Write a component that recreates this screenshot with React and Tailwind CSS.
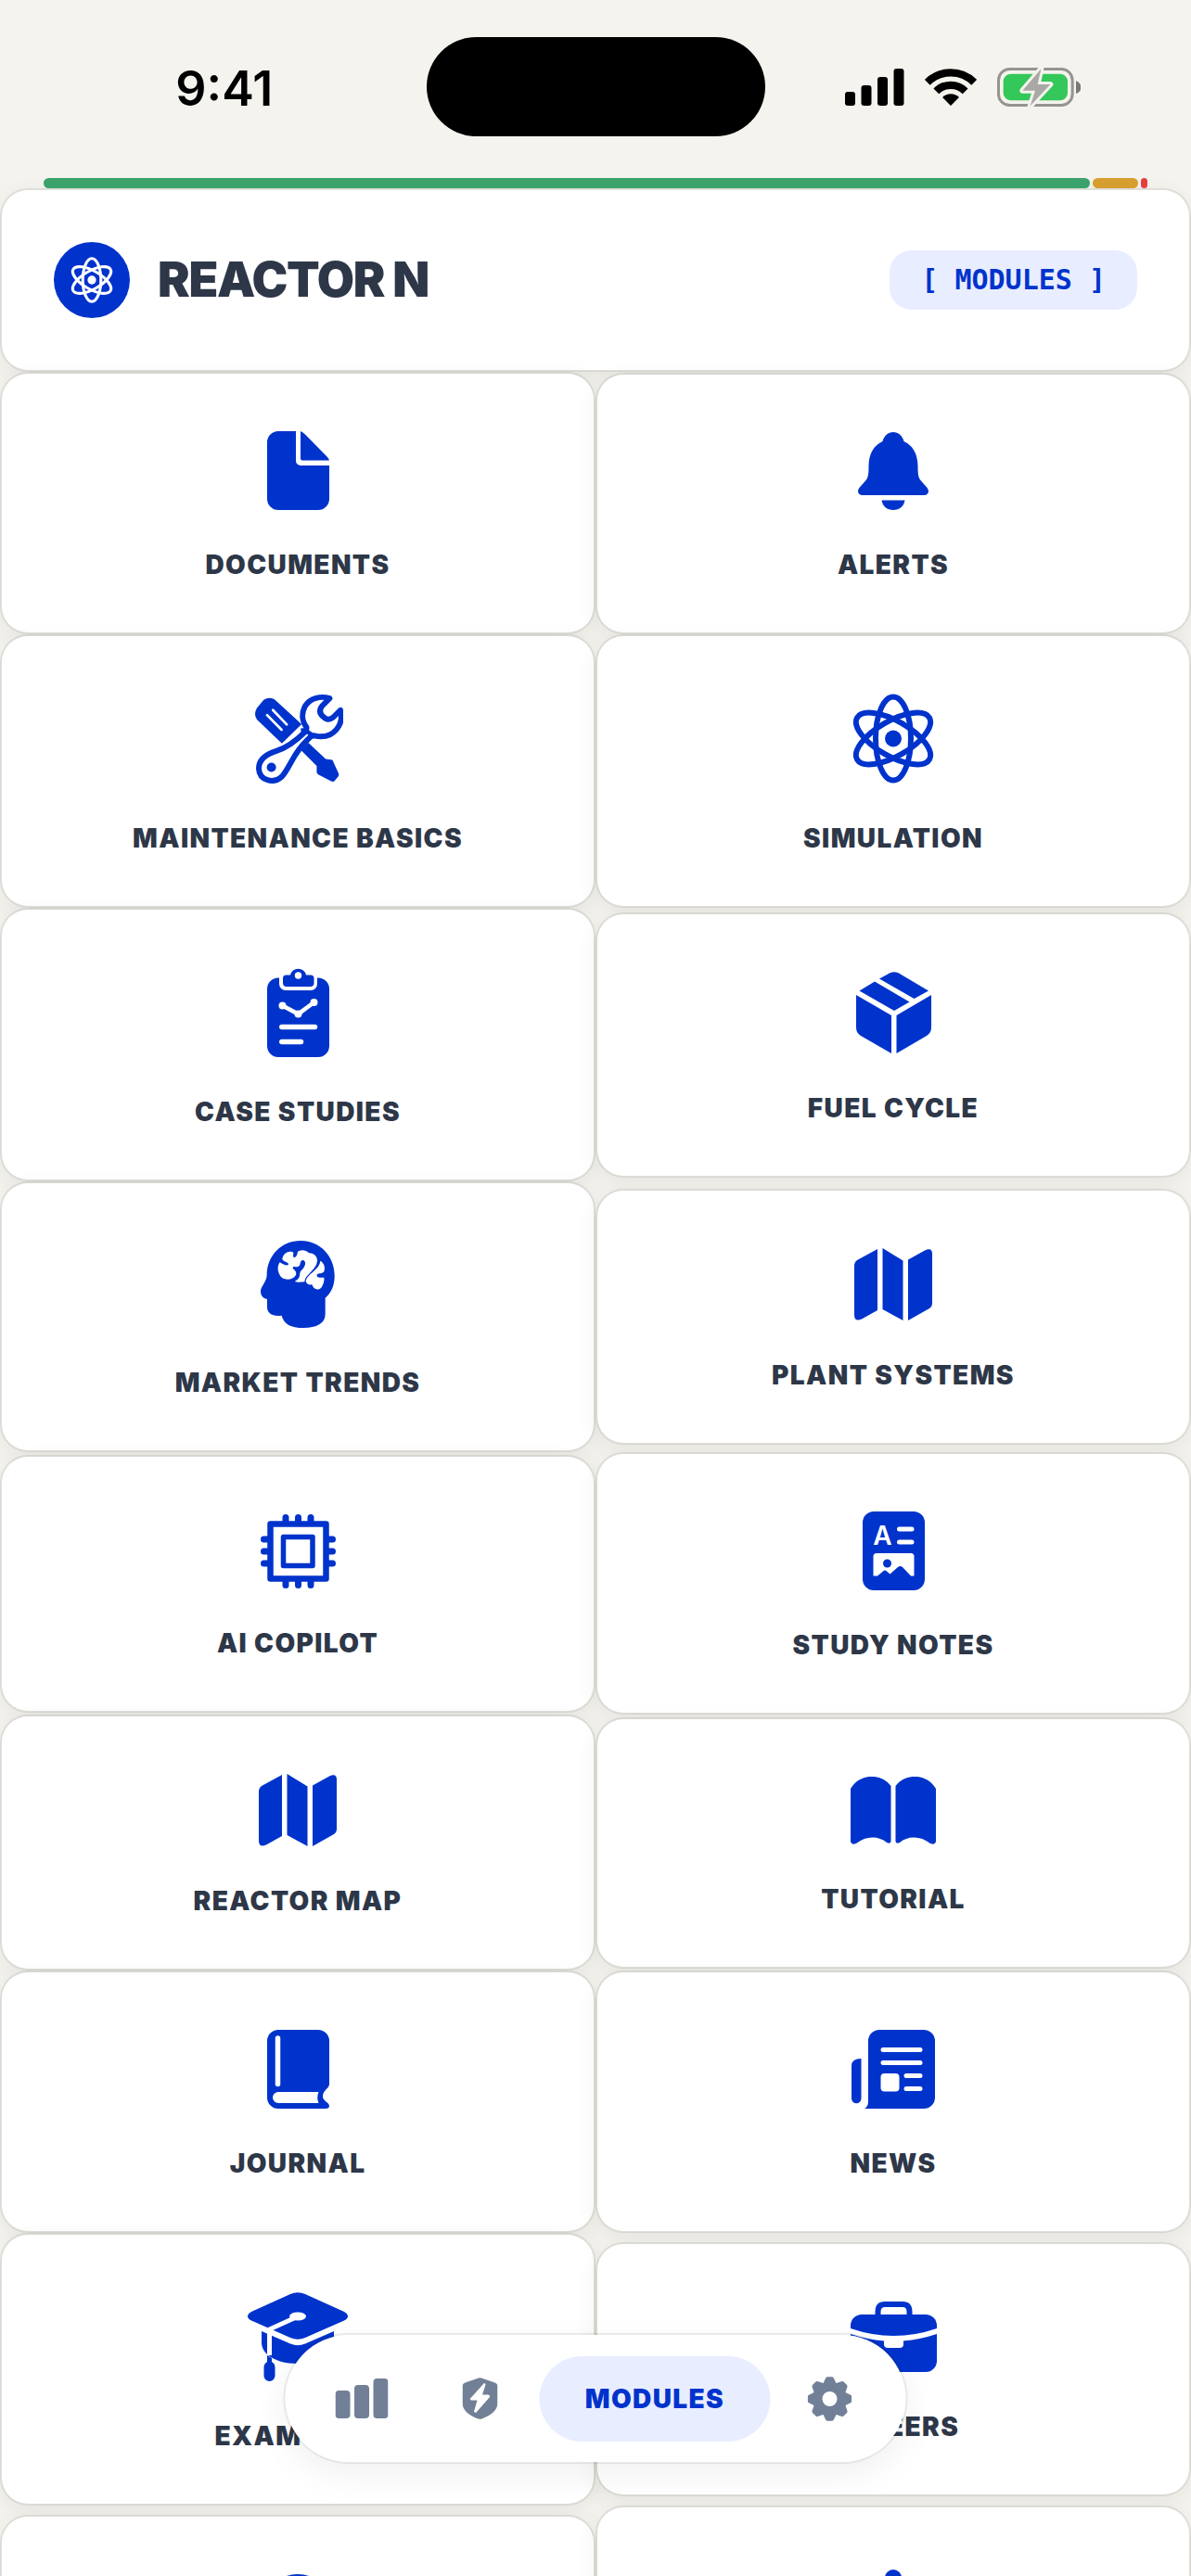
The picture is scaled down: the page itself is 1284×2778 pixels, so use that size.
function DocumentIcon() {
  return (
    <svg className="w-[67px] h-[85px]" viewBox="0 0 67 85" fill="currentColor" aria-hidden="true">
      <path d="M12 0H31V32a5 5 0 0 0 5 5H67V73a12 12 0 0 1-12 12H12A12 12 0 0 1 0 73V12A12 12 0 0 1 12 0z" />
      <path d="M36 0Q38 .5 41 3.5L65 28Q66.500 29.500 67 31.500H38a2 2 0 0 1-2-2z" />
    </svg>
  );
}

function BellIcon() {
  return (
    <svg className="w-[76px] h-[84px]" viewBox="0 0 76 84" fill="currentColor" aria-hidden="true">
      <path d="M38 0C43.500 0 48 4 49.500 10C58.500 14 64.500 23 64.500 37C64.500 45 65 49 67.500 52C71.500 57 76 60 76 64A4.500 4.500 0 0 1 71 68H5A4.500 4.500 0 0 1 0 64C0 60 4.500 57 8.500 52C11 49 11.500 45 11.500 37C11.500 23 17.500 14 26.500 10C28 4 32.500 0 38 0z" />
      <path d="M25.500 73.500H50.500C49.500 80 44.500 84 38 84S26.500 80 25.500 73.500z" />
    </svg>
  );
}

function ToolsIcon() {
  return (
    <svg className="w-[97px] h-[97px]" viewBox="5 9 292 291" fill="currentColor" aria-hidden="true">
      {/* screwdriver */}
      <path d="M39 29Q55 18 74 27L162 108L98 170L17 93Q5 76 17 55z" />
      <path d="M160 192L184 168L240 221L262 224L283 270Q284 276 278 281L268 293Q264 296 258 293L216 271Q211 268 211 262V243z" />
      <path d="M50 78L97 126M69 62L114 109" fill="none" stroke="white" strokeWidth="8" strokeLinecap="round" />
      {/* wrench */}
      <path
        d="M253 24C225 15 190 22 174 48C160 73 164 99 178 118C179 126 176 130 172 134C146 160 118 183 80 195C48 205 23 222 23 252C25 292 72 302 98 278C123 250 138 198 177 163C186 153 194 143 204 145C240 155 274 139 287 105C292 90 292 76 288 62L264 86Q247 99 233 84Q213 68 229 48z"
        fill="white" stroke="currentColor" strokeWidth="18" strokeLinejoin="round"
      />
      <path d="M160 128Q173 126 180 131Q187 137 199 145" fill="none" stroke="currentColor" strokeWidth="14" />
      <circle cx="64" cy="248" r="15" />
    </svg>
  );
}

function AtomIcon({ className }) {
  return (
    <svg className={className} viewBox="0 0 88 97" fill="none" stroke="currentColor" strokeWidth="6" aria-hidden="true">
      <ellipse cx="44" cy="48.500" rx="19" ry="45" transform="rotate(60 44 48.500)" />
      <ellipse cx="44" cy="48.500" rx="19" ry="45" transform="rotate(-60 44 48.500)" />
      <ellipse cx="44" cy="48.500" rx="19" ry="45" />
      <circle cx="44" cy="48.500" r="9" fill="currentColor" stroke="none" />
    </svg>
  );
}

function ClipboardIcon() {
  return (
    <svg className="w-[67px] h-[97px]" viewBox="0 0 67 97" fill="currentColor" aria-hidden="true">
      <path d="M12 11.500H13V18a7 7 0 0 0 7 7H47a7 7 0 0 0 7-7V11.500H55a12 12 0 0 1 12 12V85a12 12 0 0 1-12 12H12A12 12 0 0 1 0 85V23.500A12 12 0 0 1 12 11.500z" />
      <path d="M20 8.500H25A8.700 8.700 0 0 1 42 8.500H47a3.500 3.500 0 0 1 3.500 3.500V17a4 4 0 0 1-4 4H21a4 4 0 0 1-4-4V12a3.500 3.500 0 0 1 3-3.500z" />
      <circle cx="33.500" cy="9" r="3.700" fill="white" />
      <g stroke="white" fill="none" strokeLinecap="round" strokeWidth="5.500">
        <path d="M16.500 41.500L33.500 50.500L50.500 38" strokeWidth="4.500" />
        <path d="M15.800 64.500H51.500M15.800 80.500H36.500" />
      </g>
      <g fill="white">
        <circle cx="16.500" cy="41.500" r="4" />
        <circle cx="33.500" cy="50.500" r="4" />
        <circle cx="50.500" cy="38" r="4" />
      </g>
    </svg>
  );
}

function CubeIcon() {
  return (
    <svg className="w-[81px] h-[88px]" viewBox="0 0 81 88" fill="currentColor" aria-hidden="true">
      <path d="M0 25L38 47V88L5 69Q0 66 0 60z" />
      <path d="M81 25L43.500 47V88L76 69Q81 66 81 60z" />
      <path d="M3.500 20.500L20 10.500L57.500 32.500L41 42z" />
      <path d="M25 7.500L36 1.500Q41 -1 46 1.500L78 20.500L62.500 29z" />
    </svg>
  );
}

function BrainIcon() {
  return (
    <svg className="w-[94px] h-[94px]" viewBox="12 18 282 282" fill="currentColor" aria-hidden="true">
      <path d="M163 18C225 18 272 68 272 132C272 162 262 186 242 203V256C242 286 214 300 172 300C130 300 108 288 101 260C72 264 54 254 54 232V207C40 204 33 194 33 182C33 166 52 152 53 130C53 66 100 18 163 18z" />
      <path
        d="M135 54C118 50 104 62 103 79C110 87 122 88 123 94C122 101 108 97 95 88C85 100 87 126 103 139C118 147 140 143 147 129C150 120 145 114 137 108C137 98 144 103 150 103C162 102 160 92 163 85C169 77 179 83 177 94C174 110 161 114 160 124C160 137 154 144 143 150C152 154 164 152 175 151C176 127 213 114 216 84C217 68 204 57 189 58C179 45 159 47 153 54C151 62 150 70 142 72C136 71 139 63 139 56z"
        fill="white"
      />
      <path
        d="M226 83C240 91 242 106 238 118C232 126 222 122 216 127C213 133 216 137 223 137H238C240 151 233 165 228 171C215 181 203 173 199 160C189 162 181 157 179 149C184 123 222 115 226 83z"
        fill="white"
      />
    </svg>
  );
}

function MapIcon() {
  return (
    <svg className="w-[84px] h-[78px]" viewBox="0 0 84 78" fill="currentColor" aria-hidden="true">
      <path d="M25 1V67L8 76.500Q0 80 0 72V18Q0 15 3 13z" />
      <path d="M30.500 0L52.500 13.500V78L30.500 66z" />
      <path d="M58 12.500L76 2.500Q84 -1 84 6V60Q84 63 81 65L58 78z" />
    </svg>
  );
}

function ChipIcon() {
  return (
    <svg className="w-[81px] h-[80px]" viewBox="0 0 81 80" fill="none" stroke="currentColor" strokeLinejoin="round" aria-hidden="true">
      <rect x="10.500" y="10.500" width="60" height="59" strokeWidth="6.500" />
      <rect x="24.500" y="24.500" width="31.500" height="31" strokeWidth="5.500" />
      <path
        d="M27 3.500V8M40.500 3.500V8M54 3.500V8M27 72V76.500M40.500 72V76.500M54 72V76.500M3.500 27H8M3.500 40H8M3.500 53H8M73 27H77.500M73 40H77.500M73 53H77.500"
        strokeWidth="7" strokeLinecap="round"
      />
    </svg>
  );
}

function NotesIcon() {
  return (
    <svg className="w-[67px] h-[85px]" viewBox="0 0 67 85" fill="currentColor" aria-hidden="true">
      <rect width="67" height="85" rx="12" />
      <text x="21.500" y="36" textAnchor="middle" fontFamily="Inter, sans-serif" fontSize="28" fontWeight="600" fill="white">A</text>
      <path d="M39.500 19H53M39.500 33H53" stroke="white" strokeWidth="5" strokeLinecap="round" />
      <path d="M15 45H52a3.500 3.500 0 0 1 3.500 3.500V69.500H52L43 60Q40.500 58 38 60L29.500 67.500L26 64.500Q24 62.500 22 64.500L16 69.500H11.500V48.500A3.500 3.500 0 0 1 15 45z" fill="white" />
      <circle cx="26.500" cy="56" r="4.500" />
    </svg>
  );
}

function OpenBookIcon() {
  return (
    <svg className="w-[92px] h-[73px]" viewBox="0 0 92 73" fill="currentColor" aria-hidden="true">
      <path d="M0 13C10 -4 33 -4 43.500 10V70Q42.500 73 39 71C30 63.500 17 63.500 6 72Q1 74 0 70z" />
      <path d="M92 13C82 -4 59 -4 48.500 10V70Q49.500 73 53 71C62 63.500 75 63.500 86 72Q91 74 92 70z" />
    </svg>
  );
}

function JournalIcon() {
  return (
    <svg className="w-[67px] h-[85px]" viewBox="0 0 67 85" fill="currentColor" aria-hidden="true">
      <path d="M12 0H55a12 12 0 0 1 12 12V59C66 64 60 65 60 72C60 77 67 78 67 82Q67 85 63 85H12A12 12 0 0 1 0 73V12A12 12 0 0 1 12 0z" />
      <path d="M11.500 9V58.500" stroke="white" strokeWidth="5.500" strokeLinecap="round" />
      <path d="M12 67H55.500Q53 73 55.500 79H12A6 6 0 0 1 12 67z" fill="white" />
    </svg>
  );
}

function NewsIcon() {
  return (
    <svg className="w-[90px] h-[85px]" viewBox="0 0 90 85" fill="currentColor" aria-hidden="true">
      <path d="M30 0H78a12 12 0 0 1 12 12V73a12 12 0 0 1-12 12H14Q18 83 18 77V12A12 12 0 0 1 30 0z" />
      <path d="M10.500 31V74A5.200 5.200 0 0 1 0 74V39Q0 31 10.500 31z" />
      <path d="M34 21.500H74M34 35.500H74M59 49.500H74M59 63.500H74" stroke="white" strokeWidth="5" strokeLinecap="round" />
      <rect x="31.500" y="47" width="20" height="19.500" rx="4" fill="white" />
    </svg>
  );
}

function GraduationIcon() {
  return (
    <svg className="w-[108px] h-[96px]" viewBox="0 0 108 96" fill="currentColor" aria-hidden="true">
      <path d="M15 42L46 55.500Q54 59 62 55.500L93 42V54C93 68 76 77 54 77S15 68 15 54z" />
      <path d="M46 2Q54 -1.500 62 2L104 21Q112 26 104 30.500L62 49Q54 52.500 46 49L4 30.500Q-4 26 4 21z" />
      <path d="M50 28L23.500 40V68" fill="none" stroke="white" strokeWidth="5" />
      <ellipse cx="54" cy="26" rx="9" ry="4.500" fill="white" />
      <path d="M21 68L26 71V75Q29.500 77 29.500 81V90a6 6 0 0 1-12 0V81Q17.500 77 21 75z" />
    </svg>
  );
}

function BriefcaseIcon() {
  return (
    <svg className="w-[93px] h-[76px]" viewBox="0 0 93 76" fill="currentColor" aria-hidden="true">
      <path d="M29.500 16V11Q29.500 3 37 3H56Q63.500 3 63.500 11V16" fill="none" stroke="currentColor" strokeWidth="6" />
      <path d="M12 14H81a12 12 0 0 1 12 12V29Q46.500 45 0 29V26A12 12 0 0 1 12 14z" />
      <path d="M0 35Q18 41 36 42.500V46a4 4 0 0 0 4 4H53a4 4 0 0 0 4-4V42.500Q75 41 93 35V64a12 12 0 0 1-12 12H12A12 12 0 0 1 0 64z" />
    </svg>
  );
}

function LensIcon() {
  return (
    <svg className="w-[76px] h-[76px]" viewBox="0 0 76 76" fill="currentColor" aria-hidden="true">
      <circle cx="38" cy="38" r="38" />
    </svg>
  );
}

function NodeIcon() {
  return (
    <svg className="w-[76px] h-[96px]" viewBox="0 0 76 96" fill="currentColor" aria-hidden="true">
      <circle cx="38" cy="14" r="9" />
      <path d="M38 20V90" stroke="currentColor" strokeWidth="6" />
    </svg>
  );
}

function SignalIcon() {
  return (
    <svg className="w-16 h-10" viewBox="0 0 64 40" aria-hidden="true">
      <rect x="0" y="25" width="11" height="15" rx="3" />
      <rect x="17.500" y="18" width="11" height="22" rx="3" />
      <rect x="35" y="9" width="11" height="31" rx="3" />
      <rect x="52.500" y="0" width="11" height="40" rx="3" />
    </svg>
  );
}

function WifiIcon() {
  return (
    <svg className="w-14 h-10" viewBox="290 39 168 121" fill="none" stroke="black" strokeWidth="25" aria-hidden="true">
      <path d="M297.600 83.600A108 108 0 0 1 450.400 83.600" />
      <path d="M326.600 112.600A67 67 0 0 1 421.400 112.600" />
      <path d="M374 160L347 133A38 38 0 0 1 401 133z" fill="black" stroke="none" />
    </svg>
  );
}

function BatteryIcon() {
  return (
    <svg className="w-[90px] h-[42px]" viewBox="525 37 270 126" aria-hidden="true">
      <rect x="529.500" y="41.500" width="239" height="117" rx="36" fill="none" stroke="#96948f" strokeWidth="9" />
      <rect x="545" y="57" width="208" height="86" rx="25" fill="#34c759" />
      <path d="M780 80Q796 86 796 100.500T780 121z" fill="#7b7975" />
      <path
        d="M667 41L607 111H648L632 161L697 91H656z"
        fill="#a9a8a4" stroke="#f4f3ee" strokeWidth="18" strokeLinejoin="round" paintOrder="stroke"
      />
    </svg>
  );
}

function BarsIcon() {
  return (
    <svg className="w-[57px] h-[43px]" viewBox="0 0 57 43" fill="currentColor" aria-hidden="true">
      <rect x="0" y="13" width="16" height="30" rx="4" />
      <rect x="20.500" y="7" width="16" height="36" rx="4" />
      <rect x="41" y="0" width="16" height="43" rx="4" />
    </svg>
  );
}

function ShieldIcon() {
  return (
    <svg className="w-[38px] h-[45px]" viewBox="0 0 38 45" fill="currentColor" aria-hidden="true">
      <path d="M16 1Q19 -.5 22 1L35 5.500Q38 6.500 38 9.500V27C38 36 30 41 21 44.500Q19 45.200 17 44.500C8 41 0 36 0 27V9.500Q0 6.500 3 5.500z" />
      <path d="M23.500 6L8.500 22.500Q8 24 9.500 24.500H16L12.500 36.500Q13.500 38.500 15 37.500L29.500 21Q30 19 28 18.500H21.500L25 7.500Q24.800 6 23.500 6z" fill="white" />
    </svg>
  );
}

const TEETH = [0, 45, 90, 135, 180, 225, 270, 315];

function GearIcon() {
  return (
    <svg className="w-12 h-12" viewBox="0 0 48 48" fill="currentColor" aria-hidden="true">
      {TEETH.map((angle) => (
        <path key={angle} d="M16 9L19.500 2Q20 .3 21.500 .3H26.500Q28 .3 28.500 2L32 9z" transform={`rotate(${angle} 24 24)`} />
      ))}
      <circle cx="24" cy="24" r="13" fill="none" stroke="currentColor" strokeWidth="10" />
    </svg>
  );
}

const modules = [
  { label: "DOCUMENTS", icon: <DocumentIcon /> },
  { label: "ALERTS", icon: <BellIcon /> },
  { label: "MAINTENANCE BASICS", icon: <ToolsIcon /> },
  { label: "SIMULATION", icon: <AtomIcon className="w-[88px] h-[97px]" /> },
  { label: "CASE STUDIES", icon: <ClipboardIcon /> },
  { label: "FUEL CYCLE", icon: <CubeIcon /> },
  { label: "MARKET TRENDS", icon: <BrainIcon /> },
  { label: "PLANT SYSTEMS", icon: <MapIcon /> },
  { label: "AI COPILOT", icon: <ChipIcon /> },
  { label: "STUDY NOTES", icon: <NotesIcon /> },
  { label: "REACTOR MAP", icon: <MapIcon /> },
  { label: "TUTORIAL", icon: <OpenBookIcon /> },
  { label: "JOURNAL", icon: <JournalIcon /> },
  { label: "NEWS", icon: <NewsIcon /> },
  { label: "EXAM PREP", icon: <GraduationIcon /> },
  { label: "CAREERS", icon: <BriefcaseIcon /> },
  { label: "", icon: <LensIcon /> },
  { label: "", icon: <NodeIcon /> },
];

function ModuleCard({ label, icon }) {
  return (
    <button className="flex flex-col items-center w-full pt-[62px] pb-[55px] bg-white border-2 border-black/8 bg-clip-padding rounded-[30px] shadow-[0_6px_24px_rgba(0,0,0,0.06)] text-[#0033cc]">
      {icon}
      <span className="mt-[41px] h-9 text-[28px] leading-9 font-black tracking-wider text-[#2d3748]">
        {label}
      </span>
    </button>
  );
}

function StatusBar() {
  return (
    <div className="grid grid-cols-[1fr_365px_1fr] items-center pt-10 pb-[45px]">
      <span className="pl-6 pt-1 text-center text-[52px] leading-none font-semibold text-black">9:41</span>
      <div className="h-[107px] rounded-full bg-black" />
      <div className="flex items-center justify-center gap-[22px] pr-8">
        <SignalIcon />
        <WifiIcon />
        <BatteryIcon />
      </div>
    </div>
  );
}

function ProgressBar() {
  return (
    <div className="flex gap-[3px] px-[47px] h-[11px]">
      <div className="grow-[1128] rounded-full bg-[#3aa26a]" />
      <div className="grow-[49] rounded-full bg-[#d69e2e]" />
      <div className="grow-[7] rounded-full bg-[#e53e3e]" />
    </div>
  );
}

function Header() {
  return (
    <header className="flex items-center justify-between h-[198px] px-14 bg-white border-2 border-black/8 bg-clip-padding rounded-[30px] shadow-[0_6px_24px_rgba(0,0,0,0.06)]">
      <div className="flex items-center gap-[30px]">
        <div className="flex items-center justify-center size-[82px] rounded-full bg-[#0033cc] text-white">
          <AtomIcon className="w-[46px] h-[50px]" />
        </div>
        <h1 className="text-[52px] leading-none font-black tracking-tight text-[#2d3748]">REACTOR N</h1>
      </div>
      <span className="px-[34px] py-3 rounded-3xl bg-[#e8edff] font-['DejaVu_Sans_Mono',monospace] text-[30px] leading-10 font-bold text-[#0033cc]">
        [ MODULES ]
      </span>
    </header>
  );
}

function BottomNav() {
  return (
    <nav className="absolute bottom-[121px] left-1/2 -translate-x-1/2 flex items-center px-[18px] h-[141px] rounded-full bg-white border-2 border-black/8 bg-clip-padding shadow-[0_12px_36px_rgba(0,0,0,0.06)] text-[#718096]">
      <button className="flex justify-center w-32" aria-label="Stats">
        <BarsIcon />
      </button>
      <button className="flex justify-center w-32" aria-label="Safety">
        <ShieldIcon />
      </button>
      <button className="w-[249px] h-[92px] rounded-full bg-[#e8edff] text-[28px] font-black tracking-wider text-[#0033cc]">
        MODULES
      </button>
      <button className="flex justify-center w-32" aria-label="Settings">
        <GearIcon />
      </button>
    </nav>
  );
}

export default function App() {
  return (
    <div className="relative h-screen overflow-hidden bg-[#f4f3ee] font-['Inter',sans-serif]">
      <StatusBar />
      <ProgressBar />
      <Header />

      <main className="grid grid-cols-2 items-center">
        {modules.map((module, i) => (
          <ModuleCard key={i} label={module.label} icon={module.icon} />
        ))}
      </main>

      <BottomNav />
    </div>
  );
}
